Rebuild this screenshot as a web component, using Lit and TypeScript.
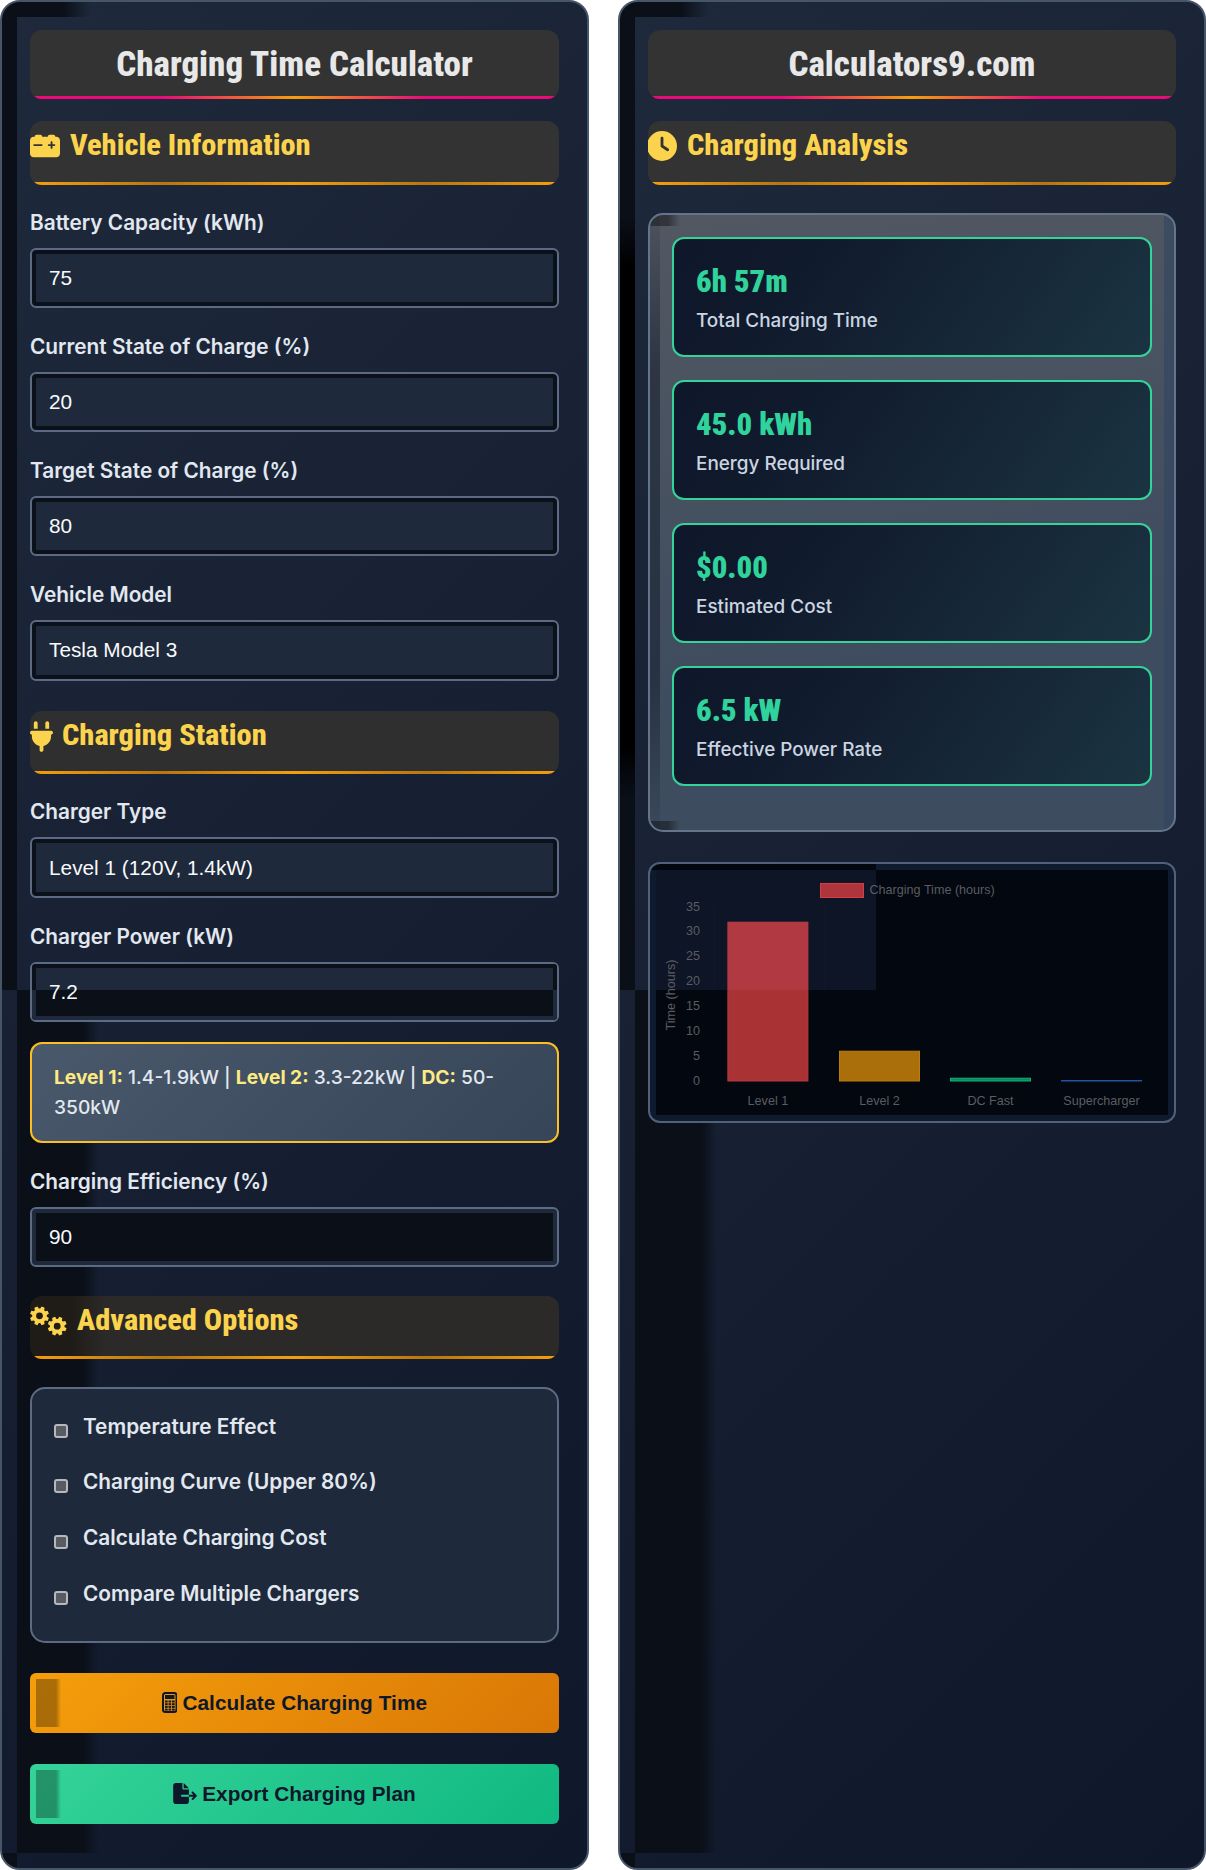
import { LitElement, html, css, svg } from "lit";
import { customElement } from "lit/decorators.js";

const ico = (w: number, h: number, vb: string, d: string, cls = "") =>
  svg`<svg class="ic ${cls}" width=${w} height=${h} viewBox=${vb}><path fill="currentColor" fill-rule="evenodd" d=${d}/></svg>`;

const battery = ico(30, 30, "0 0 512 512", "M80 96c0-17.7 14.3-32 32-32h64c17.7 0 32 14.3 32 32l96 0c0-17.7 14.3-32 32-32h64c17.7 0 32 14.3 32 32h16c35.3 0 64 28.7 64 64V384c0 35.3-28.7 64-64 64H64c-35.3 0-64-28.7-64-64V160c0-35.3 28.7-64 64-64l16 0zm304 96c0-8.8-7.2-16-16-16s-16 7.2-16 16v32H320c-8.8 0-16 7.2-16 16s7.2 16 16 16h32v32c0 8.8 7.2 16 16 16s16-7.2 16-16V256h32c8.8 0 16-7.2 16-16s-7.2-16-16-16H384V192zM72 224c-8.8 0-16 7.2-16 16s7.2 16 16 16H200c8.8 0 16-7.2 16-16s-7.2-16-16-16H72z");
const plug = ico(23, 31, "0 0 384 512", "M96 0C78.3 0 64 14.3 64 32v96h64V32c0-17.7-14.3-32-32-32zM288 0c-17.7 0-32 14.3-32 32v96h64V32c0-17.7-14.3-32-32-32zM32 160c-17.7 0-32 14.3-32 32s14.3 32 32 32v32c0 77.4 55 142 128 156.8V480c0 17.7 14.3 32 32 32s32-14.3 32-32V412.8C297 398 352 333.4 352 256V224c17.7 0 32-14.3 32-32s-14.3-32-32-32H32z", "plg");
const clock = ico(30, 30, "0 0 512 512", "M256 0a256 256 0 1 1 0 512A256 256 0 1 1 256 0zM232 120V256c0 8 4 15.5 10.7 20l96 64c11 7.4 25.9 4.4 33.3-6.7s4.4-25.9-6.7-33.3L280 243.2V120c0-13.3-10.7-24-24-24s-24 10.7-24 24z", "clk");
const fileExport = ico(24, 21, "0 0 576 512", "M0 64C0 28.7 28.7 0 64 0H224V128c0 17.7 14.3 32 32 32H384V288H216c-13.3 0-24 10.7-24 24s10.7 24 24 24H384V448c0 35.3-28.7 64-64 64H64c-35.3 0-64-28.7-64-64V64zM384 336V288H494.1l-39-39c-9.4-9.4-9.4-24.6 0-33.9s24.6-9.4 33.9 0l80 80c9.4 9.4 9.4 24.6 0 33.9l-80 80c-9.4 9.4-24.6 9.4-33.9 0s-9.4-24.6 0-33.9l39-39H384zm0-208H256V0L384 128z");

function cog(cx: number, cy: number, r: number, hole: number, n = 8) {
  const pts: string[] = [];
  const step = (Math.PI * 2) / n;
  for (let i = 0; i < n; i++) {
    const a = i * step + step / 2;
    const p = (rad: number, off: number) => `${(cx + rad * Math.cos(a + off)).toFixed(2)} ${(cy + rad * Math.sin(a + off)).toFixed(2)}`;
    pts.push(p(r * 0.76, -step * 0.38), p(r, -step * 0.22), p(r, step * 0.22), p(r * 0.76, step * 0.38));
  }
  const h = `M${cx - hole} ${cy}a${hole} ${hole} 0 1 0 ${hole * 2} 0a${hole} ${hole} 0 1 0 ${-hole * 2} 0z`;
  return `M${pts.join("L")}z${h}`;
}
const gears = svg`<svg class="ic" width="37" height="30" viewBox="0 0 37 30"><path fill="currentColor" fill-rule="evenodd" d=${cog(9.5, 9.8, 9.6, 3.4)}/><path fill="currentColor" fill-rule="evenodd" d=${cog(27.2, 20.2, 9.6, 3.4)}/></svg>`;
const calc = svg`<svg class="ic" width="15.5" height="21" viewBox="0 0 31 42"><rect x="2" y="2" width="27" height="38" rx="5" fill="none" stroke="currentColor" stroke-width="4"/><rect x="6" y="6" width="19" height="8" fill="currentColor"/>${[0, 1, 2, 3].map((r) => [0, 1, 2].map((c) => svg`<rect x=${6 + c * 7} y=${17 + r * 5.4} width="5.4" height="4" fill="currentColor"/>`))}</svg>`;

const F = (label: string, value: string, cls = "") => html`<label>${label}</label><div class="inp ${cls}"><span>${value}</span></div>`;
const sec = (icon: unknown, t: string, cls = "") => html`<div class="sec ${cls}">${icon}<span>${t}</span></div>`;
const card = (v: string, l: string) => html`<div class="card"><div class="v">${v}</div><div class="l">${l}</div></div>`;
const chk = (t: string) => html`<div class="row"><i class="cb"></i><span>${t}</span></div>`;

const ticks = [35, 30, 25, 20, 15, 10, 5, 0];
const bars = [
  { n: "Level 1", x: 71.4, top: 51.7, f: "#a83234", s: "#b93a40" },
  { n: "Level 2", x: 183, top: 180.7, f: "#aa6e0a", s: "#bd7c0c" },
  { n: "DC Fast", x: 294, top: 207.7, f: "#0c8a5f", s: "#10b27a" },
  { n: "Supercharger", x: 405, top: 210, f: "#1c3768", s: "#2453a0" },
];
const chart = svg`<svg class="chart" width="512" height="245" viewBox="0 0 512 245" font-family="Liberation Sans, Arial, sans-serif" font-size="12.6" fill="#5a5d62">
  <rect width="220" height="120" fill="#0d1526"/>
  ${[0, 111].map((i) => svg`<line x1=${58 + i} y1="37" x2=${58 + i} y2="120" stroke="#fff" stroke-opacity=".025"/>`)}
  <rect x="164.5" y="13.5" width="43" height="14" fill="#ad353b" stroke="#d63d48"/>
  <text x="213.5" y="23.5">Charging Time (hours)</text>
  ${ticks.map((t, i) => svg`<text x="44" y=${40.5 + i * 24.9} text-anchor="end">${t}</text>`)}
  <text transform="translate(18.5 125) rotate(-90)" text-anchor="middle">Time (hours)</text>
  ${bars.map((b) => svg`<rect x=${b.x + 0.5} y=${b.top + 0.5} width="80" height=${210.5 - b.top} fill=${b.f} stroke=${b.s}/><text x=${b.x + 40.5} y="235" text-anchor="middle">${b.n}</text>`)}
  <rect x="72" y="52" width="80" height="68" fill="#b13a42"/>
</svg>`;

@customElement("app-root")
export class AppRoot extends LitElement {
  static styles = css`
    :host { display: block; width: 1206px; height: 1870px; overflow: hidden; background: #fff; font-family: Inter, sans-serif; }
    .wrap { display: grid; grid-template-columns: 589px 588px; gap: 29px; height: 1870px; }
    .panel {
      --d: #0a0f18;
      box-sizing: border-box; height: 1870px; overflow: hidden; padding: 28px;
      border: 2px solid #475569; border-radius: 20px;
      background:
        linear-gradient(var(--d), var(--d)) 0 0 / 15px 988px no-repeat,
        linear-gradient(90deg, var(--d) 60px, transparent 88px) 0 0 / 88px 15px no-repeat,
        linear-gradient(90deg, var(--d) 66px, transparent 82px) 15px 988px / 82px 863px no-repeat,
        linear-gradient(var(--d), var(--d)) 0 1851px / 15px 20px no-repeat,
        linear-gradient(135deg, #1e293b, #0f172a);
    }
    .panel.right {
      background:
        linear-gradient(180deg, var(--d), #000 50px, #000 530px, var(--d)) 0 215px / 15px 580px no-repeat,
        linear-gradient(var(--d), var(--d)) 0 0 / 15px 988px no-repeat,
        linear-gradient(90deg, var(--d) 60px, transparent 88px) 0 0 / 88px 15px no-repeat,
        linear-gradient(90deg, var(--d) 66px, transparent 82px) 15px 988px / 82px 863px no-repeat,
        linear-gradient(var(--d), var(--d)) 0 1851px / 15px 20px no-repeat,
        linear-gradient(135deg, #1e293b, #0f172a);
    }
    .title, .sec { position: relative; box-sizing: border-box; background: #333; border-radius: 12px; overflow: hidden; }
    .title { height: 68.5px; text-align: center; font: 800 35px/70px "Roboto Condensed", Roboto, sans-serif; color: #e8e8e8; margin-bottom: 22.5px; }
    .title::after, .sec::after { content: ""; position: absolute; left: 2px; right: 2px; bottom: 0; height: 3px; border-radius: 0 0 8px 8px; }
    .title::after { background: linear-gradient(90deg, #ec0a78, #ec0a78 25%, #f59e0b 50%, #ec0a78 75%, #ec0a78); }
    .sec::after { background: linear-gradient(90deg, #f59e0b, #b8770f 25%, #f59e0b 50%, #b8770f 75%, #f59e0b); }
    .sec { display: flex; align-items: flex-start; gap: 10px; height: 63.5px; margin: 30px 0 23px; padding-top: 5px; font: 800 30.4px/37px "Roboto Condensed", Roboto, sans-serif; color: #fcd34d; }
    .sec.first { margin-top: 0; }
    .sec.mid { background: #302f2f; }
    .sec.dim { margin-top: 29px; background: linear-gradient(90deg, #1f1b16 40px, #2b2a29 75px); }
    .sec.opt { margin-bottom: 28px; }
    .ic { flex: none; margin-top: 5px; }
    .clk { margin-left: -1px; }
    .plg { margin-right: -1px; }
    label { display: block; font: 600 20.8px/30px Inter, sans-serif; color: #e2e8f0; margin-bottom: 10px; }
    .inp { position: relative; display: flex; align-items: center; height: 60px; box-sizing: border-box; border: 2px solid #5c6b83; border-radius: 6px; background: #1e293b; box-shadow: inset 0 0 0 4px #0b111b; padding: 0 17px; font: 20.8px "Liberation Sans", sans-serif; color: #f8fafc; margin-bottom: 24px; overflow: hidden; }
    .inp.sel { height: 61px; }
    .inp span { position: relative; z-index: 1; }
    .inp.flip { background: #0a0f18; box-shadow: inset 0 0 0 4px #1e293b; }
    .inp.split { box-shadow: none; margin-bottom: 20px; }
    .inp.split::before, .inp.split::after { content: ""; position: absolute; left: 0; right: 0; }
    .inp.split::before { top: 0; height: 26px; background: #1e293b; box-shadow: inset 4px 4px 0 #0b111b, inset -4px 0 0 #0b111b; }
    .inp.split::after { top: 26px; bottom: 0; background: #0a0f18; box-shadow: inset 4px 0 0 #1e293b, inset -4px -4px 0 #1e293b; }
    .info { box-sizing: border-box; height: 101px; padding: 18px 22px; border: 2px solid #fbbf24; border-radius: 12px; background: linear-gradient(135deg, #4a586b, #374558); font: 500 19.2px/30px Inter, sans-serif; color: #e2e8f0; margin-bottom: 23.5px; }
    .info b { font-weight: 700; color: #fdea82; }
    .opts { box-sizing: border-box; height: 256px; border: 2px solid #5c6b83; border-radius: 15px; background: #1e293b; padding: 22.5px 22px; margin-bottom: 29.5px; }
    .row { display: flex; align-items: flex-start; gap: 15px; height: 55.7px; font: 600 20.8px/30.4px Inter, sans-serif; color: #e2e8f0; }
    .cb { flex: none; box-sizing: border-box; width: 14px; height: 14px; margin-top: 12px; border: 2.5px solid #b5b8bc; border-radius: 3px; background: #585c62; }
    .btn { box-sizing: border-box; height: 60px; display: flex; align-items: center; justify-content: center; gap: 5px; border-radius: 6px; font: 700 20.8px/24px "Liberation Sans", sans-serif; letter-spacing: .05px; color: #0f172a; margin-bottom: 31px; }
    .btn .ic { margin-top: 0; }
    .btn.a { background: linear-gradient(rgba(0,0,0,.3), rgba(0,0,0,.3)) 6px 6px / 20px 48px no-repeat, linear-gradient(90deg, rgba(0,0,0,.3), transparent) 26px 6px / 5px 48px no-repeat, linear-gradient(135deg, #f59e0b, #d97706); }
    .btn.b { background: linear-gradient(rgba(0,0,0,.3), rgba(0,0,0,.3)) 6px 6px / 20px 48px no-repeat, linear-gradient(90deg, rgba(0,0,0,.3), transparent) 26px 6px / 5px 48px no-repeat, linear-gradient(135deg, #34d399, #10b981); }
    .res { box-sizing: border-box; height: 619px; padding: 22.5px 22px; border: 2px solid #64748b; border-radius: 15px; margin-bottom: 30px;
      background:
        linear-gradient(90deg, rgba(0,0,0,.4) 18px, transparent 30px) 0 0 / 30px 11px no-repeat,
        linear-gradient(90deg, rgba(0,0,0,.4) 18px, transparent 30px) 0 100% / 30px 9px no-repeat,
        linear-gradient(180deg, rgba(30,41,59,.1), rgba(20,28,42,.55) 25%, rgba(20,28,42,.55) 75%, rgba(30,41,59,.1)) 0 0 / 10px 100% no-repeat,
        linear-gradient(rgba(45,65,95,.5), rgba(45,65,95,.5)) 100% 0 / 10px 100% no-repeat,
        linear-gradient(170deg, #525862, #3e4c5f 70%); }
    .card { box-sizing: border-box; height: 120px; padding: 20.5px 22px; border: 2px solid #34d399; border-radius: 12px; background: linear-gradient(125deg, #0f172a, #111b2e 30%, #1b3441); margin-bottom: 23px; }
    .v { font: 900 30.6px/44px "Roboto Condensed", Roboto, sans-serif; color: #2fd39b; }
    .l { font: 500 18.9px/28px Inter, sans-serif; color: #cbd5e1; margin-top: 3px; }
    .cbox { box-sizing: border-box; height: 261px; padding: 6px; border: 2px solid #526079; border-radius: 12px; background: linear-gradient(#03070f, #03070f) 0 0 / 226px 6px no-repeat, #0e1a2e; line-height: 0; }
    .chart { display: block; background: #03070f; }
  `;
  render() {
    return html`<div class="wrap">
      <div class="panel">
        <div class="title">Charging Time Calculator</div>
        ${sec(battery, "Vehicle Information", "first")}
        ${F("Battery Capacity (kWh)", "75")}
        ${F("Current State of Charge (%)", "20")}
        ${F("Target State of Charge (%)", "80")}
        ${F("Vehicle Model", "Tesla Model 3", "sel")}
        ${sec(plug, "Charging Station", "mid")}
        ${F("Charger Type", "Level 1 (120V, 1.4kW)", "sel")}
        ${F("Charger Power (kW)", "7.2", "split")}
        <div class="info"><b>Level 1:</b> 1.4-1.9kW | <b>Level 2:</b> 3.3-22kW | <b>DC:</b> 50-350kW</div>
        ${F("Charging Efficiency (%)", "90", "flip")}
        ${sec(gears, "Advanced Options", "dim opt")}
        <div class="opts">
          ${chk("Temperature Effect")}
          ${chk("Charging Curve (Upper 80%)")}
          ${chk("Calculate Charging Cost")}
          ${chk("Compare Multiple Chargers")}
        </div>
        <div class="btn a">${calc}<span>Calculate Charging Time</span></div>
        <div class="btn b">${fileExport}<span>Export Charging Plan</span></div>
      </div>
      <div class="panel right">
        <div class="title">Calculators9.com</div>
        ${sec(clock, "Charging Analysis", "first opt")}
        <div class="res">
          ${card("6h 57m", "Total Charging Time")}
          ${card("45.0 kWh", "Energy Required")}
          ${card("$0.00", "Estimated Cost")}
          ${card("6.5 kW", "Effective Power Rate")}
        </div>
        <div class="cbox">${chart}</div>
      </div>
    </div>`;
  }
}
